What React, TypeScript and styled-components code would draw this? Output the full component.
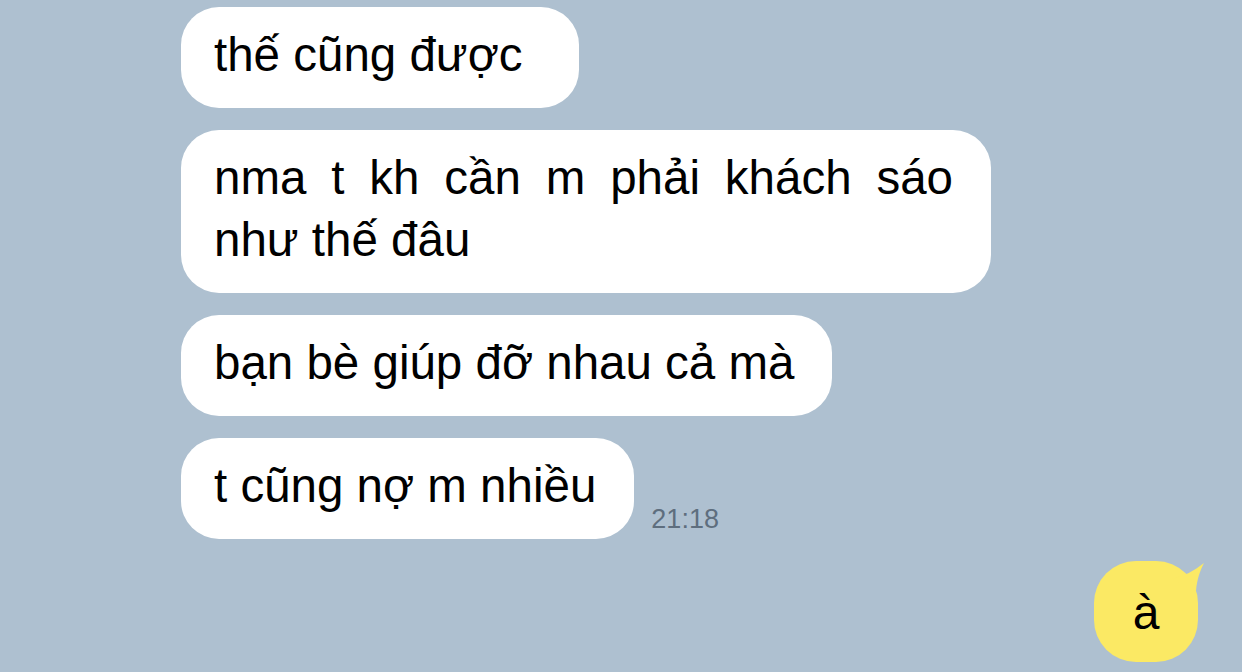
import React from 'react'
import styled, { createGlobalStyle } from 'styled-components'

const GlobalStyle = createGlobalStyle`
  html, body {
    margin: 0;
    padding: 0;
    background: #aec0d0;
    overflow: hidden;
  }
  body {
    font-family: 'Liberation Sans', Arial, 'Noto Sans', sans-serif;
  }
`

const Chat = styled.div`
  width: 1242px;
  height: 672px;
  box-sizing: border-box;
  padding: 7px 0 0 181px;
  display: flex;
  flex-direction: column;
  gap: 22px;
  background: #aec0d0;
  overflow: hidden;
`

const Row = styled.div`
  display: flex;
  align-items: flex-end;
`

const Bubble = styled.div<{ $justify?: boolean; $padRight?: number }>`
  box-sizing: border-box;
  max-width: 810px;
  min-height: 101px;
  padding: 17px ${p => p.$padRight ?? 38}px 22px 33px;
  background: #fff;
  border-radius: 38px;
  color: #000;
  font-size: 47.5px;
  line-height: 62px;
  text-align: ${p => (p.$justify ? 'justify' : 'left')};
`

const Time = styled.span`
  margin: 0 0 3px 17px;
  font-size: 27px;
  line-height: 34px;
  color: #5e6e7e;
`

const OutRow = styled.div`
  display: flex;
  justify-content: flex-end;
  padding-right: 44px;
`

const OutBubble = styled.div`
  position: relative;
  width: 104px;
  height: 101px;
  border-radius: 42px;
  background: #fbe964;
  color: #000;
  font-size: 48px;
  line-height: 1;
  display: flex;
  align-items: center;
  justify-content: center;
  padding-top: 2px;
  box-sizing: border-box;
`

const Tail = styled.svg`
  position: absolute;
  top: 2px;
  right: -6px;
`

export default function App() {
  return (
    <>
      <GlobalStyle />
      <Chat>
        <Row>
          <Bubble $padRight={56}>thế cũng được</Bubble>
        </Row>
        <Row>
          <Bubble $justify>nma t kh cần m phải khách sáo như thế đâu</Bubble>
        </Row>
        <Row>
          <Bubble>bạn bè giúp đỡ nhau cả mà</Bubble>
        </Row>
        <Row>
          <Bubble>t cũng nợ m nhiều</Bubble>
          <Time>21:18</Time>
        </Row>
        <OutRow>
          <OutBubble>
            <Tail width="32" height="30" viewBox="0 0 32 30">
              <path d="M0 16 C12 13 22 8 32 0 C28 8 25 16 24 28 Z" fill="#fbe964" />
            </Tail>
            à
          </OutBubble>
        </OutRow>
      </Chat>
    </>
  )
}
